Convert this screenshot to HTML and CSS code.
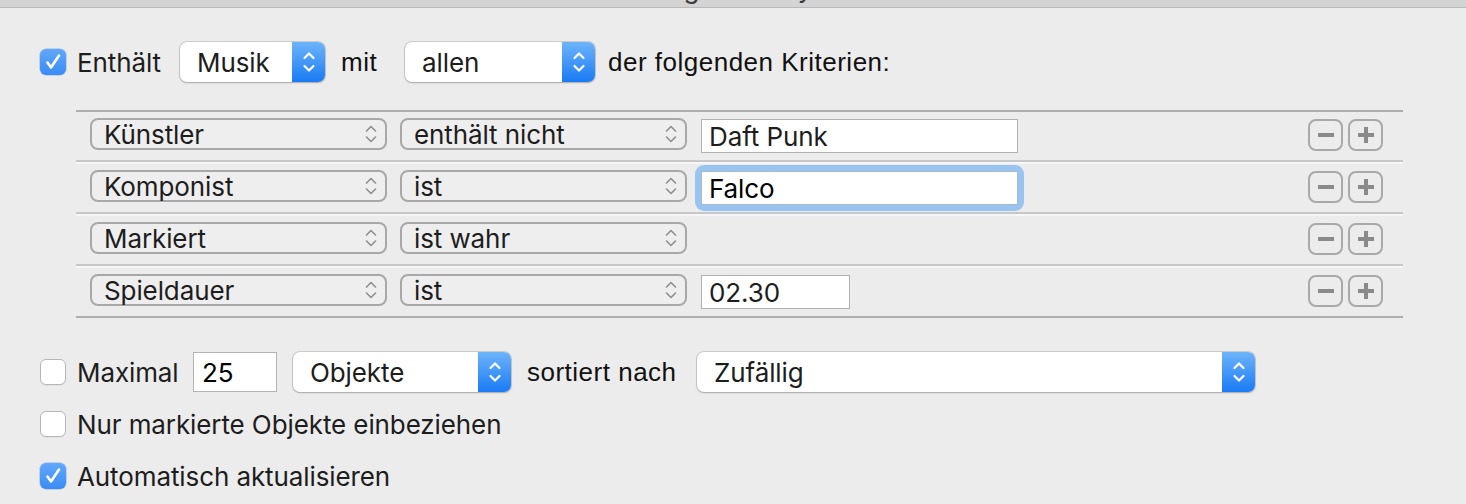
FILE: index.html
```html
<!DOCTYPE html>
<html lang="de">
<head>
<meta charset="utf-8">
<title>Intelligente Playlist</title>
<link rel="stylesheet" href="styles.css">
</head>
<body>
<div class="titlebar"><div class="title">Intelligente Playlist</div></div>
<main class="sheet">
  <div class="top-row">
    <span class="cb checked"><svg width="26" height="26" viewBox="0 0 26 26"><path d="M7.5 13.5 L11 18.5 L19 6.5" fill="none" stroke="#fff" stroke-width="2.6" stroke-linecap="round" stroke-linejoin="round"/></svg></span>
    <span class="lbl lbl-enth">Enthält</span>
    <div class="popup w-musik"><span class="pl">Musik</span><span class="stepper"><svg width="14" height="28" viewBox="0 0 14 28"><path d="M2.5 10 L7 5.5 L11.5 10 M2.5 18 L7 22.5 L11.5 18" fill="none" stroke="#fff" stroke-width="2.2" stroke-linecap="round" stroke-linejoin="round"/></svg></span></div>
    <span class="hl lbl-mit">mit</span>
    <div class="popup w-allen"><span class="pl">allen</span><span class="stepper"><svg width="14" height="28" viewBox="0 0 14 28"><path d="M2.5 10 L7 5.5 L11.5 10 M2.5 18 L7 22.5 L11.5 18" fill="none" stroke="#fff" stroke-width="2.2" stroke-linecap="round" stroke-linejoin="round"/></svg></span></div>
    <span class="hl lbl-crit">der folgenden Kriterien:</span>
  </div>

  <div class="rules">
    <div class="rule">
      <div class="gpop w-field"><span>Künstler</span><svg class="chev" width="12" height="20" viewBox="0 0 12 20"><path d="M1.5 7 L6 2.5 L10.5 7 M1.5 13 L6 17.5 L10.5 13" fill="none" stroke="#8e8e8e" stroke-width="1.6" stroke-linecap="round" stroke-linejoin="round"/></svg></div>
      <div class="gpop w-op"><span>enthält nicht</span><svg class="chev" width="12" height="20" viewBox="0 0 12 20"><path d="M1.5 7 L6 2.5 L10.5 7 M1.5 13 L6 17.5 L10.5 13" fill="none" stroke="#8e8e8e" stroke-width="1.6" stroke-linecap="round" stroke-linejoin="round"/></svg></div>
      <div class="tf long">Daft Punk</div>
      <div class="pm">
        <span class="btn"><svg width="20" height="20" viewBox="0 0 20 20"><rect x="2" y="8" width="16" height="4" fill="#8a8a8a"/></svg></span>
        <span class="btn"><svg width="20" height="20" viewBox="0 0 20 20"><rect x="2" y="8" width="16" height="4" fill="#8a8a8a"/><rect x="8" y="2" width="4" height="16" fill="#8a8a8a"/></svg></span>
      </div>
    </div>
    <div class="rule">
      <div class="gpop w-field"><span>Komponist</span><svg class="chev" width="12" height="20" viewBox="0 0 12 20"><path d="M1.5 7 L6 2.5 L10.5 7 M1.5 13 L6 17.5 L10.5 13" fill="none" stroke="#8e8e8e" stroke-width="1.6" stroke-linecap="round" stroke-linejoin="round"/></svg></div>
      <div class="gpop w-op"><span>ist</span><svg class="chev" width="12" height="20" viewBox="0 0 12 20"><path d="M1.5 7 L6 2.5 L10.5 7 M1.5 13 L6 17.5 L10.5 13" fill="none" stroke="#8e8e8e" stroke-width="1.6" stroke-linecap="round" stroke-linejoin="round"/></svg></div>
      <div class="ring"><div class="tf long focused">Falco</div></div>
      <div class="pm">
        <span class="btn"><svg width="20" height="20" viewBox="0 0 20 20"><rect x="2" y="8" width="16" height="4" fill="#8a8a8a"/></svg></span>
        <span class="btn"><svg width="20" height="20" viewBox="0 0 20 20"><rect x="2" y="8" width="16" height="4" fill="#8a8a8a"/><rect x="8" y="2" width="4" height="16" fill="#8a8a8a"/></svg></span>
      </div>
    </div>
    <div class="rule">
      <div class="gpop w-field"><span>Markiert</span><svg class="chev" width="12" height="20" viewBox="0 0 12 20"><path d="M1.5 7 L6 2.5 L10.5 7 M1.5 13 L6 17.5 L10.5 13" fill="none" stroke="#8e8e8e" stroke-width="1.6" stroke-linecap="round" stroke-linejoin="round"/></svg></div>
      <div class="gpop w-op"><span>ist wahr</span><svg class="chev" width="12" height="20" viewBox="0 0 12 20"><path d="M1.5 7 L6 2.5 L10.5 7 M1.5 13 L6 17.5 L10.5 13" fill="none" stroke="#8e8e8e" stroke-width="1.6" stroke-linecap="round" stroke-linejoin="round"/></svg></div>
      <div class="pm">
        <span class="btn"><svg width="20" height="20" viewBox="0 0 20 20"><rect x="2" y="8" width="16" height="4" fill="#8a8a8a"/></svg></span>
        <span class="btn"><svg width="20" height="20" viewBox="0 0 20 20"><rect x="2" y="8" width="16" height="4" fill="#8a8a8a"/><rect x="8" y="2" width="4" height="16" fill="#8a8a8a"/></svg></span>
      </div>
    </div>
    <div class="rule">
      <div class="gpop w-field"><span>Spieldauer</span><svg class="chev" width="12" height="20" viewBox="0 0 12 20"><path d="M1.5 7 L6 2.5 L10.5 7 M1.5 13 L6 17.5 L10.5 13" fill="none" stroke="#8e8e8e" stroke-width="1.6" stroke-linecap="round" stroke-linejoin="round"/></svg></div>
      <div class="gpop w-op"><span>ist</span><svg class="chev" width="12" height="20" viewBox="0 0 12 20"><path d="M1.5 7 L6 2.5 L10.5 7 M1.5 13 L6 17.5 L10.5 13" fill="none" stroke="#8e8e8e" stroke-width="1.6" stroke-linecap="round" stroke-linejoin="round"/></svg></div>
      <div class="tf short">02.30</div>
      <div class="pm">
        <span class="btn"><svg width="20" height="20" viewBox="0 0 20 20"><rect x="2" y="8" width="16" height="4" fill="#8a8a8a"/></svg></span>
        <span class="btn"><svg width="20" height="20" viewBox="0 0 20 20"><rect x="2" y="8" width="16" height="4" fill="#8a8a8a"/><rect x="8" y="2" width="4" height="16" fill="#8a8a8a"/></svg></span>
      </div>
    </div>
  </div>

  <div class="opts">
    <div class="opt">
      <span class="cb off"></span>
      <span class="lbl lbl-max">Maximal</span>
      <div class="numfield">25</div>
      <div class="popup w-obj"><span class="pl">Objekte</span><span class="stepper"><svg width="14" height="28" viewBox="0 0 14 28"><path d="M2.5 10 L7 5.5 L11.5 10 M2.5 18 L7 22.5 L11.5 18" fill="none" stroke="#fff" stroke-width="2.2" stroke-linecap="round" stroke-linejoin="round"/></svg></span></div>
      <span class="hl lbl-sort">sortiert nach</span>
      <div class="popup w-zuf"><span class="pl">Zufällig</span><span class="stepper"><svg width="14" height="28" viewBox="0 0 14 28"><path d="M2.5 10 L7 5.5 L11.5 10 M2.5 18 L7 22.5 L11.5 18" fill="none" stroke="#fff" stroke-width="2.2" stroke-linecap="round" stroke-linejoin="round"/></svg></span></div>
    </div>
    <div class="opt">
      <span class="cb off"></span>
      <span class="lbl">Nur markierte Objekte einbeziehen</span>
    </div>
    <div class="opt">
      <span class="cb checked"><svg width="26" height="26" viewBox="0 0 26 26"><path d="M7.5 13.5 L11 18.5 L19 6.5" fill="none" stroke="#fff" stroke-width="2.6" stroke-linecap="round" stroke-linejoin="round"/></svg></span>
      <span class="lbl">Automatisch aktualisieren</span>
    </div>
  </div>
</main>
</body>
</html>
```

FILE: styles.css
```css
html, body {
  margin: 0;
  padding: 0;
}
body {
  width: 1466px;
  height: 504px;
  overflow: hidden;
  background: #ececec;
  font-family: Inter, "Noto Sans", sans-serif;
  font-size: 26px;
  color: #1d1d1d;
}

.titlebar {
  height: 7px;
  background: #d5d4d5;
  border-bottom: 1px solid #b9b9b9;
  overflow: hidden;
  display: flex;
  justify-content: center;
}
.title {
  font-size: 26px;
  line-height: 26px;
  margin-top: -24px;
  color: #3a3a3a;
}

.sheet {
  padding: 34px 0 0 40px;
}

/* first line */
.top-row {
  display: flex;
  align-items: center;
  height: 40px;
}
.cb {
  flex: none;
  width: 26px;
  height: 26px;
  box-sizing: border-box;
  border-radius: 6px;
  display: flex;
  align-items: center;
  justify-content: center;
}
.cb.checked {
  background: linear-gradient(#62a8f9, #3a8bf5);
  box-shadow: 0 0 0 0.5px rgba(30, 100, 200, 0.4);
}
.cb.off {
  background: #fff;
  border: 1px solid #b6b6b6;
  box-shadow: 0 1px 0 rgba(0, 0, 0, 0.04);
}
.lbl {
  margin-left: 11px;
  white-space: nowrap;
  letter-spacing: -0.1px;
}
.lbl-enth { width: 103px; flex: none; }
.hl {
  font-family: "Liberation Sans", Arial, sans-serif;
  letter-spacing: 0.5px;
  color: #111;
  white-space: nowrap;
}
.lbl-mit { margin-left: 16px; width: 64px; flex: none; }
.lbl-crit { margin-left: 13px; }

.popup {
  flex: none;
  display: flex;
  height: 40px;
  box-sizing: border-box;
  background: #fff;
  border-radius: 7px;
  box-shadow: 0 0 0 1px rgba(0, 0, 0, 0.13), 0 1px 2px rgba(0, 0, 0, 0.18);
}
.popup .pl {
  flex: 1;
  display: flex;
  align-items: center;
  padding-left: 17px;
  letter-spacing: -0.1px;
}
.stepper {
  width: 33px;
  flex: none;
  border-radius: 0 7px 7px 0;
  background: linear-gradient(#6db4fa, #1a7bf5);
  display: flex;
  align-items: center;
  justify-content: center;
}
.w-musik { width: 145px; }
.w-allen { width: 190px; }
.w-obj { width: 218px; margin-left: 16px; }
.w-zuf { width: 558px; }

/* rules */
.rules {
  margin: 28px 0 0 36px;
  width: 1327px;
  border-top: 2px solid #adadad;
  border-bottom: 2px solid #adadad;
}
.rule {
  height: 48px;
  box-sizing: border-box;
  display: flex;
  align-items: flex-start;
  padding: 6px 20px 0 14px;
}
.rule + .rule {
  height: 52px;
  padding-top: 8px;
  border-top: 2px solid #c7c7c7;
  box-shadow: inset 0 2px 0 #f6f6f6;
}
.gpop {
  flex: none;
  height: 32px;
  box-sizing: border-box;
  border: 2px solid #a8a8a8;
  border-radius: 8px;
  background: #eeeeee;
  display: flex;
  align-items: center;
  justify-content: space-between;
  padding: 0 8px 0 12px;
  letter-spacing: -0.1px;
}
.w-field { width: 297px; }
.w-op { width: 287px; margin-left: 13px; }
.chev { flex: none; }

.tf {
  flex: none;
  margin: 1px 0 0 14px;
  height: 34px;
  box-sizing: border-box;
  background: #fff;
  border: 1px solid #b1b1b1;
  padding: 0 7px;
  display: flex;
  align-items: center;
  letter-spacing: -0.1px;
}
.tf.long { width: 317px; }
.tf.short { width: 149px; }
.ring {
  flex: none;
  margin: -5px 0 0 8px;
  padding: 6px;
  border-radius: 9px;
  background: #99c3f0;
}
.ring .tf { margin: 0; }
.tf.focused { color: #000; border-color: #a9b9cc; }

.pm {
  margin: 1px 0 0 auto;
  display: flex;
  gap: 5px;
}
.btn {
  width: 35px;
  height: 32px;
  box-sizing: border-box;
  border: 2px solid #a9a9a9;
  border-radius: 8px;
  background: #ececec;
  display: flex;
  align-items: center;
  justify-content: center;
}

/* options */
.opts {
  margin-top: 34px;
  display: flex;
  flex-direction: column;
  gap: 12px;
}
.opt {
  display: flex;
  align-items: center;
  height: 40px;
}
.lbl-max { width: 116px; flex: none; }
.numfield {
  flex: none;
  width: 84px;
  height: 40px;
  box-sizing: border-box;
  background: #fff;
  border: 1px solid #b3b3b3;
  padding-left: 8px;
  display: flex;
  align-items: center;
  color: #000;
}
.lbl-sort { margin-left: 16px; width: 170px; flex: none; }
```
